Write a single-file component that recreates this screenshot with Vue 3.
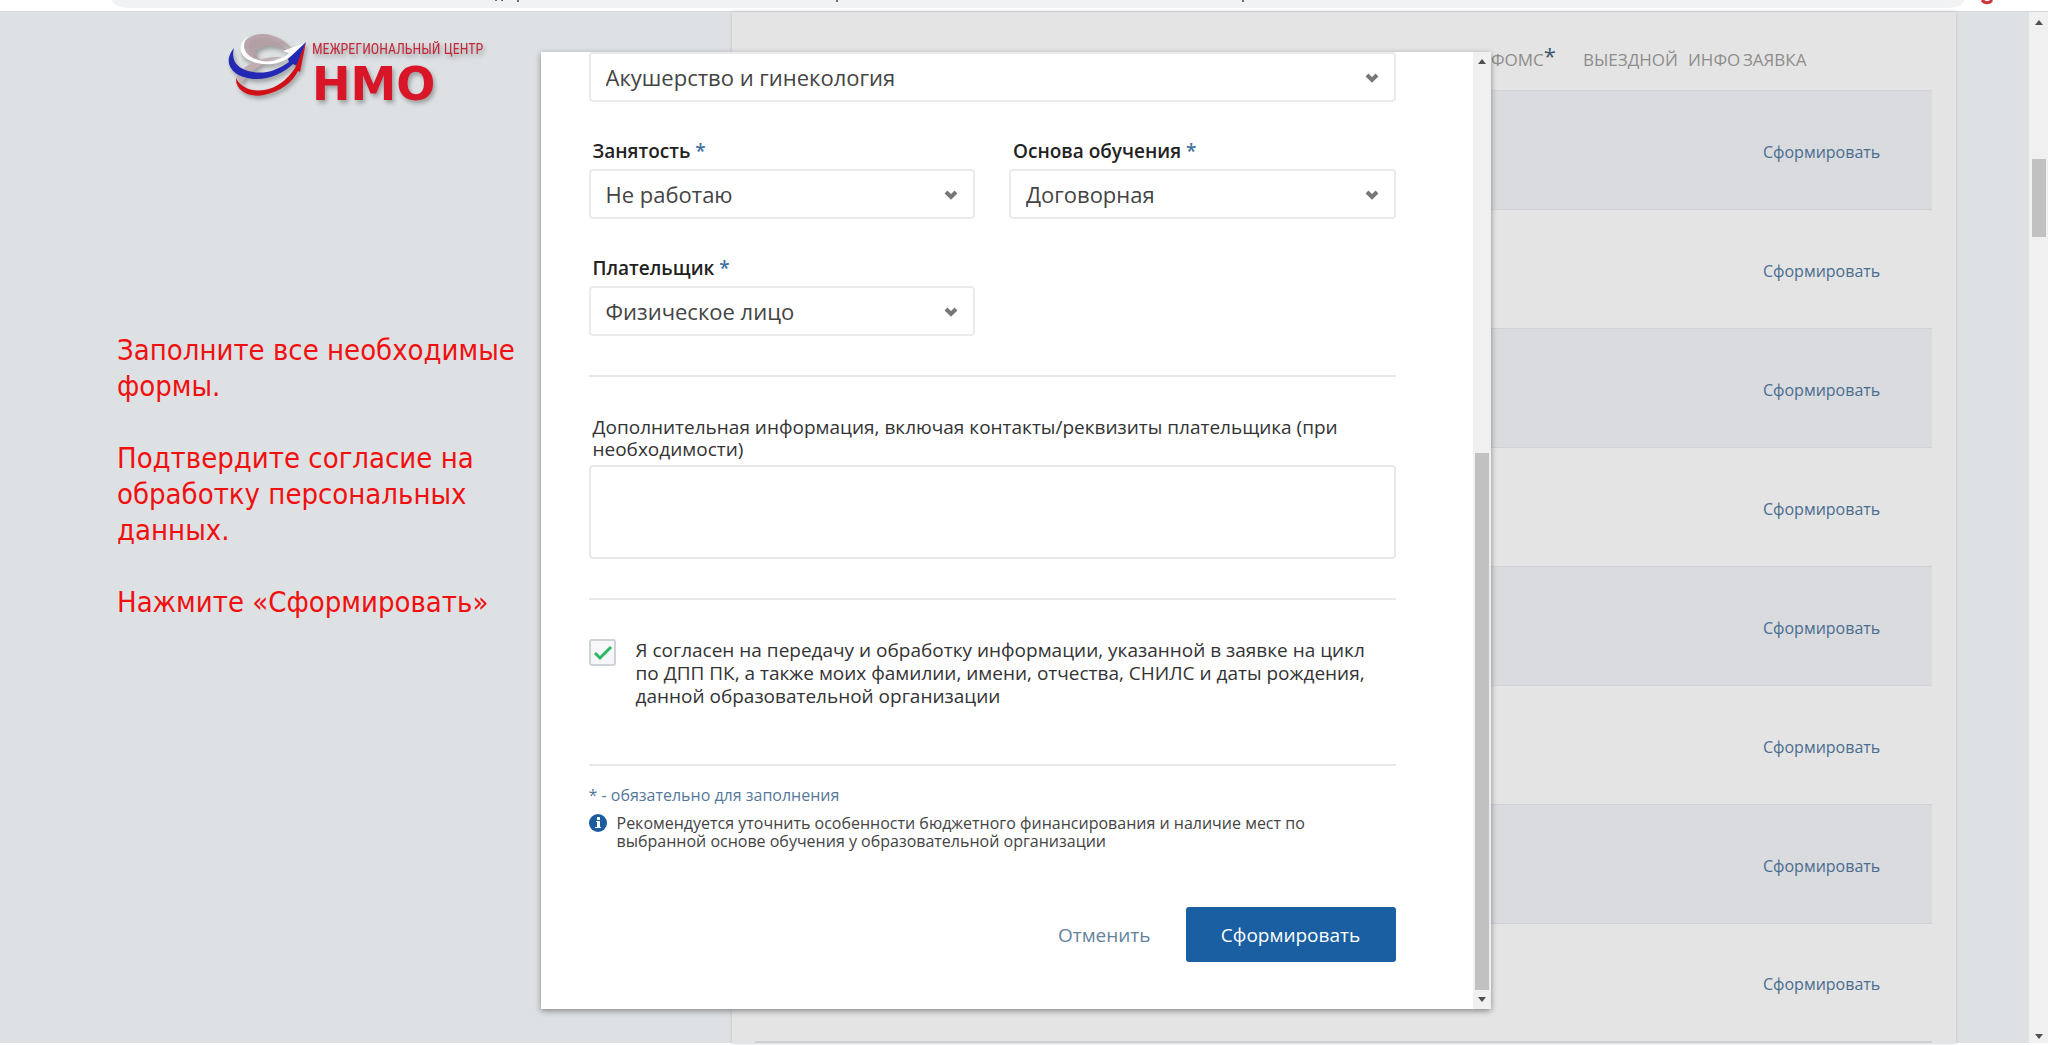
<script setup>
import { ref } from 'vue'

const rows = ref([1, 2, 3, 4, 5, 6, 7, 8])
const specialty = ref('Акушерство и гинекология')
const employment = ref('Не работаю')
const basis = ref('Договорная')
const payer = ref('Физическое лицо')
const comment = ref('')
const agreed = ref(true)
</script>

<template>
  <div class="screen">
    <header class="browser">
      <div class="address">
        <svg class="descenders" width="760" height="4" viewBox="0 0 760 4" aria-hidden="true">
          <path d="M4 0v1M10 0v1M26 0v2M345 0v2M751 0v2" stroke="#6b6e72" stroke-width="2" />
        </svg>
      </div>
      <svg class="ext" width="16" height="5" viewBox="0 0 16 5" aria-hidden="true">
        <path d="M2 0Q5 4 10 2L12 0" fill="none" stroke="#cf3338" stroke-width="3" />
      </svg>
    </header>

    <div class="window">
      <main class="page">
        <aside class="guide">
          <div class="logo">
            <svg class="emblem" width="80" height="68" viewBox="0 0 80 68" aria-hidden="true">
              <path d="M13 20C14 8 24 1 36 2C48 3 58 9 65 18C54 11 44 8 37 10C27 13 23 20 29 27C20 29 14 27 13 20Z" fill="#b9a5a9" />
              <path d="M22 9C34 2 52 8 61 21C50 13 36 11 28 19C27 24 30 27 34 29C24 27 18 18 22 9Z" fill="#b3a0a5" />
              <path d="M8 45C17 31 34 24 54 25C39 29 24 35 14 51Z" fill="#bfaeb2" />
              <path d="M20 4C13 12 14 25 34 29C44 31 55 27 61 21L55 19L77 11L67 27L63 24C53 32 41 34 29 31C10 27 8 13 20 4Z" fill="#fff" />
              <path d="M6 16C-6 30 3 45 25 47C43 48 57 40 65 32L69 34L78 10L60 27L61 30C48 39 37 42 25 40C8 37 3 28 6 16Z" fill="#2328b5" />
              <path d="M8 46C7 58 20 66 36 63C52 60 65 50 70 39L72 40L78 10L67 36C59 48 49 56 36 58C24 60 13 56 8 46Z" fill="#d01118" />
            </svg>
            <div class="brand">
              <span class="brand-top">МЕЖРЕГИОНАЛЬНЫЙ ЦЕНТР</span>
              <strong class="brand-name">НМО</strong>
            </div>
          </div>
          <div class="steps">
            <p>Заполните все необходимые формы.</p>
            <p>Подтвердите согласие на обработку персональных данных.</p>
            <p>Нажмите «Сформировать»</p>
          </div>
        </aside>

        <section class="panel">
          <table class="cycles">
            <colgroup>
              <col />
              <col class="c-foms" />
              <col class="c-visit" />
              <col class="c-info" />
              <col class="c-request" />
            </colgroup>
            <thead>
              <tr>
                <th></th>
                <th>ФОМС<sup>*</sup></th>
                <th>ВЫЕЗДНОЙ</th>
                <th>ИНФО</th>
                <th>ЗАЯВКА</th>
              </tr>
            </thead>
            <tbody>
              <tr v-for="row in rows" :key="row">
                <td></td>
                <td></td>
                <td></td>
                <td></td>
                <td class="action"><a href="#">Сформировать</a></td>
              </tr>
            </tbody>
          </table>
        </section>

        <div class="overlay">
          <div class="modal" role="dialog" aria-label="Заявка">
            <form class="form" @submit.prevent>
              <div class="select">
                <select v-model="specialty" aria-label="Специальность">
                  <option>Акушерство и гинекология</option>
                </select>
                <svg class="chev" width="14" height="12" viewBox="0 0 14 12" aria-hidden="true"><path d="M2 3L7 8L12 3" /></svg>
              </div>

              <div class="fields">
                <div class="field">
                  <label for="employment">Занятость <i>*</i></label>
                  <div class="select">
                    <select id="employment" v-model="employment"><option>Не работаю</option></select>
                    <svg class="chev" width="14" height="12" viewBox="0 0 14 12" aria-hidden="true"><path d="M2 3L7 8L12 3" /></svg>
                  </div>
                </div>
                <div class="field">
                  <label for="basis">Основа обучения <i>*</i></label>
                  <div class="select">
                    <select id="basis" v-model="basis"><option>Договорная</option></select>
                    <svg class="chev" width="14" height="12" viewBox="0 0 14 12" aria-hidden="true"><path d="M2 3L7 8L12 3" /></svg>
                  </div>
                </div>
                <div class="field">
                  <label for="payer">Плательщик <i>*</i></label>
                  <div class="select">
                    <select id="payer" v-model="payer"><option>Физическое лицо</option></select>
                    <svg class="chev" width="14" height="12" viewBox="0 0 14 12" aria-hidden="true"><path d="M2 3L7 8L12 3" /></svg>
                  </div>
                </div>
              </div>

              <hr />

              <label class="extra-label" for="extra">Дополнительная информация, включая контакты/реквизиты плательщика (при необходимости)</label>
              <textarea id="extra" v-model="comment"></textarea>

              <hr />

              <div class="consent">
                <span class="tick">
                  <input id="agree" v-model="agreed" type="checkbox" />
                  <svg v-if="agreed" width="20" height="16" viewBox="0 0 20 16" aria-hidden="true"><path d="M2 8L7 13L18 2" fill="none" stroke="#2bb865" stroke-width="3" /></svg>
                </span>
                <label for="agree">Я согласен на передачу и обработку информации, указанной в заявке на цикл по ДПП ПК, а также моих фамилии, имени, отчества, СНИЛС и даты рождения, данной образовательной организации</label>
              </div>

              <hr class="last" />

              <p class="required">* - обязательно для заполнения</p>
              <div class="hint">
                <svg width="18" height="18" viewBox="0 0 18 18" aria-hidden="true">
                  <circle cx="9" cy="9" r="9" fill="#1b5c9f" />
                  <path d="M8 3h3v3H8zM7 7h4v6h1v1H6v-1h2V8H7z" fill="#fff" />
                </svg>
                <p>Рекомендуется уточнить особенности бюджетного финансирования и наличие мест по выбранной основе обучения у образовательной организации</p>
              </div>

              <div class="buttons">
                <button type="button" class="cancel">Отменить</button>
                <button type="submit" class="submit">Сформировать</button>
              </div>
            </form>
            <div class="bar inner" aria-hidden="true">
              <span class="up"></span>
              <span class="thumb"></span>
              <span class="down"></span>
            </div>
          </div>
        </div>
      </main>
      <div class="bar outer" aria-hidden="true">
        <span class="up"></span>
        <span class="thumb"></span>
        <span class="down"></span>
      </div>
    </div>
  </div>
</template>

<style>
body {
  margin: 0;
  background: #fff;
}
</style>

<style scoped>
.screen {
  font-family: "Open Sans", "Noto Sans", sans-serif;
  padding-bottom: 2px;
}
.screen *,
.screen *::before {
  box-sizing: border-box;
}
p {
  margin: 0;
}

.browser {
  display: flex;
  align-items: flex-start;
  gap: 16px;
  height: 12px;
  padding: 0 52px 0 112px;
  border-bottom: 1px solid #d6d7d9;
}
.address {
  flex: 1;
  height: 8px;
  padding-left: 380px;
  background: #f0f2f4;
  border-radius: 0 0 18px 18px / 0 0 8px 8px;
}
.descenders,
.ext {
  display: block;
}

.window {
  display: flex;
}
.page {
  position: relative;
  flex: 1;
  display: grid;
  grid-template-columns: 361fr 603fr 36fr;
  background: #dee1e3;
}

.guide {
  padding: 20px 0 0 117px;
}
.logo {
  display: flex;
  align-items: flex-start;
  gap: 4px;
  height: 76px;
  padding-left: 111px;
  filter: drop-shadow(2px 3px 2px rgba(0, 0, 0, 0.3));
}
.brand {
  display: flex;
  flex-direction: column;
  padding-top: 8px;
  color: #c3273a;
}
.brand-top {
  font: 14px/18px "Liberation Sans Narrow", "Roboto Condensed", Roboto, sans-serif;
  white-space: nowrap;
}
.brand-name {
  font: bold 46px/52px "DejaVu Sans", sans-serif;
  color: #d91528;
}
.steps {
  display: flex;
  flex-direction: column;
  gap: 36px;
  width: 410px;
  margin-top: 224px;
  font: 29px/36px "DejaVu Sans Condensed", "DejaVu Sans", sans-serif;
  color: #f01010;
}

.panel {
  padding: 0 24px 0 23px;
  background: #e4e4e4;
  box-shadow: 0 0 3px #b9bcc6;
}
.cycles {
  width: 100%;
  table-layout: fixed;
  border-collapse: collapse;
}
.c-foms { width: 92px; }
.c-visit { width: 105px; }
.c-info { width: 55px; }
.c-request { width: 189px; }
.cycles th {
  height: 78px;
  padding: 18px 0 0;
  font-size: 17px;
  font-weight: 400;
  line-height: 24px;
  text-align: left;
  white-space: nowrap;
  color: #8f8d8c;
}
.cycles sup {
  font-size: 22px;
  line-height: 0;
  vertical-align: 2px;
  color: #3d566d;
}
.cycles td {
  height: 119px;
  padding: 0;
  border-top: 1px solid #d0d1d4;
}
.cycles tbody tr:nth-child(odd) {
  background: #d9dbdf;
}
.cycles tbody tr:last-child td {
  border-bottom: 2px solid #d0d1d4;
}
.cycles .action {
  padding: 4px 0 0 20px;
  font-size: 16px;
}
.action a {
  color: #4a6d90;
  text-decoration: none;
}

.overlay {
  position: absolute;
  inset: 0;
  display: flex;
  justify-content: center;
  align-items: flex-start;
  padding: 40px 0 0 2px;
}
.modal {
  display: flex;
  width: 950px;
  max-width: 100%;
  background: #fff;
  box-shadow: 0 2px 6px rgba(0, 0, 0, 0.4);
}
.form {
  flex: 1;
  padding: 0 77px 47px 48px;
}
.select {
  position: relative;
}
select {
  display: block;
  width: 100%;
  height: 50px;
  padding: 0 40px 0 15px;
  font: 22px/30px "Open Sans", "Noto Sans", sans-serif;
  color: #444;
  background: #fff;
  border: 2px solid #ebebeb;
  border-radius: 4px;
  appearance: none;
}
.chev {
  position: absolute;
  top: 20px;
  right: 17px;
  fill: none;
  stroke: #777;
  stroke-width: 4;
  pointer-events: none;
}
.fields {
  display: grid;
  grid-template-columns: 1fr 1fr;
  gap: 37px 34px;
  margin-top: 37px;
}
.field label {
  display: block;
  margin-bottom: 6px;
  padding-left: 4px;
  font-size: 19px;
  font-weight: 600;
  line-height: 24px;
  color: #222;
}
.field i {
  font-style: normal;
  color: #41719f;
}
hr {
  height: 2px;
  margin: 39px 0;
  border: 0;
  background: #e8e8e8;
}
.extra-label {
  display: block;
  margin-bottom: 5px;
  padding-left: 4px;
  font-size: 19px;
  line-height: 22px;
  color: #333;
}
textarea {
  display: block;
  width: 100%;
  height: 94px;
  padding: 10px 15px;
  font: 22px/30px "Open Sans", "Noto Sans", sans-serif;
  border: 2px solid #e8e8e8;
  border-radius: 4px;
  resize: none;
}
.consent {
  display: flex;
  gap: 20px;
  padding-right: 20px;
  font-size: 19px;
  line-height: 23px;
  color: #333;
}
.tick {
  position: relative;
  flex: none;
  width: 27px;
  height: 27px;
}
.tick input {
  display: block;
  width: 27px;
  height: 27px;
  margin: 0;
  background: #f7f7fa;
  border: 2px solid #cfd2d6;
  border-radius: 3px;
  appearance: none;
}
.tick svg {
  position: absolute;
  top: 6px;
  left: 4px;
  pointer-events: none;
}
hr.last {
  margin: 56px 0 20px;
}
.required {
  font-size: 16px;
  line-height: 18px;
  color: #55799b;
}
.hint {
  display: flex;
  gap: 10px;
  margin-top: 10px;
  font-size: 16px;
  line-height: 18px;
  color: #444;
}
.hint svg {
  flex: none;
}
.buttons {
  display: flex;
  justify-content: flex-end;
  align-items: center;
  gap: 35px;
  margin-top: 57px;
}
button {
  padding: 0;
  font: 19px/24px "Open Sans", "Noto Sans", sans-serif;
  border: 0;
}
.cancel {
  color: #64829b;
  background: none;
}
.submit {
  width: 210px;
  height: 55px;
  color: #fff;
  background: #1b5fa3;
  border-radius: 3px;
}

.bar {
  display: flex;
  flex-direction: column;
  align-items: center;
  background: #f0f0f0;
}
.outer {
  width: 19px;
  padding: 8px 0 4px;
}
.inner {
  width: 18px;
  padding: 7px 0;
}
.up,
.down {
  border: 4px solid transparent;
}
.up {
  border-top: 0;
  border-bottom: 5px solid #505050;
}
.down {
  margin-top: auto;
  border-bottom: 0;
  border-top: 5px solid #505050;
}
.thumb {
  width: 14px;
  background: #c1c1c1;
}
.outer .thumb {
  height: 78px;
  margin-top: 134px;
}
.inner .thumb {
  flex: 1;
  margin: 389px 0 7px;
}
</style>
